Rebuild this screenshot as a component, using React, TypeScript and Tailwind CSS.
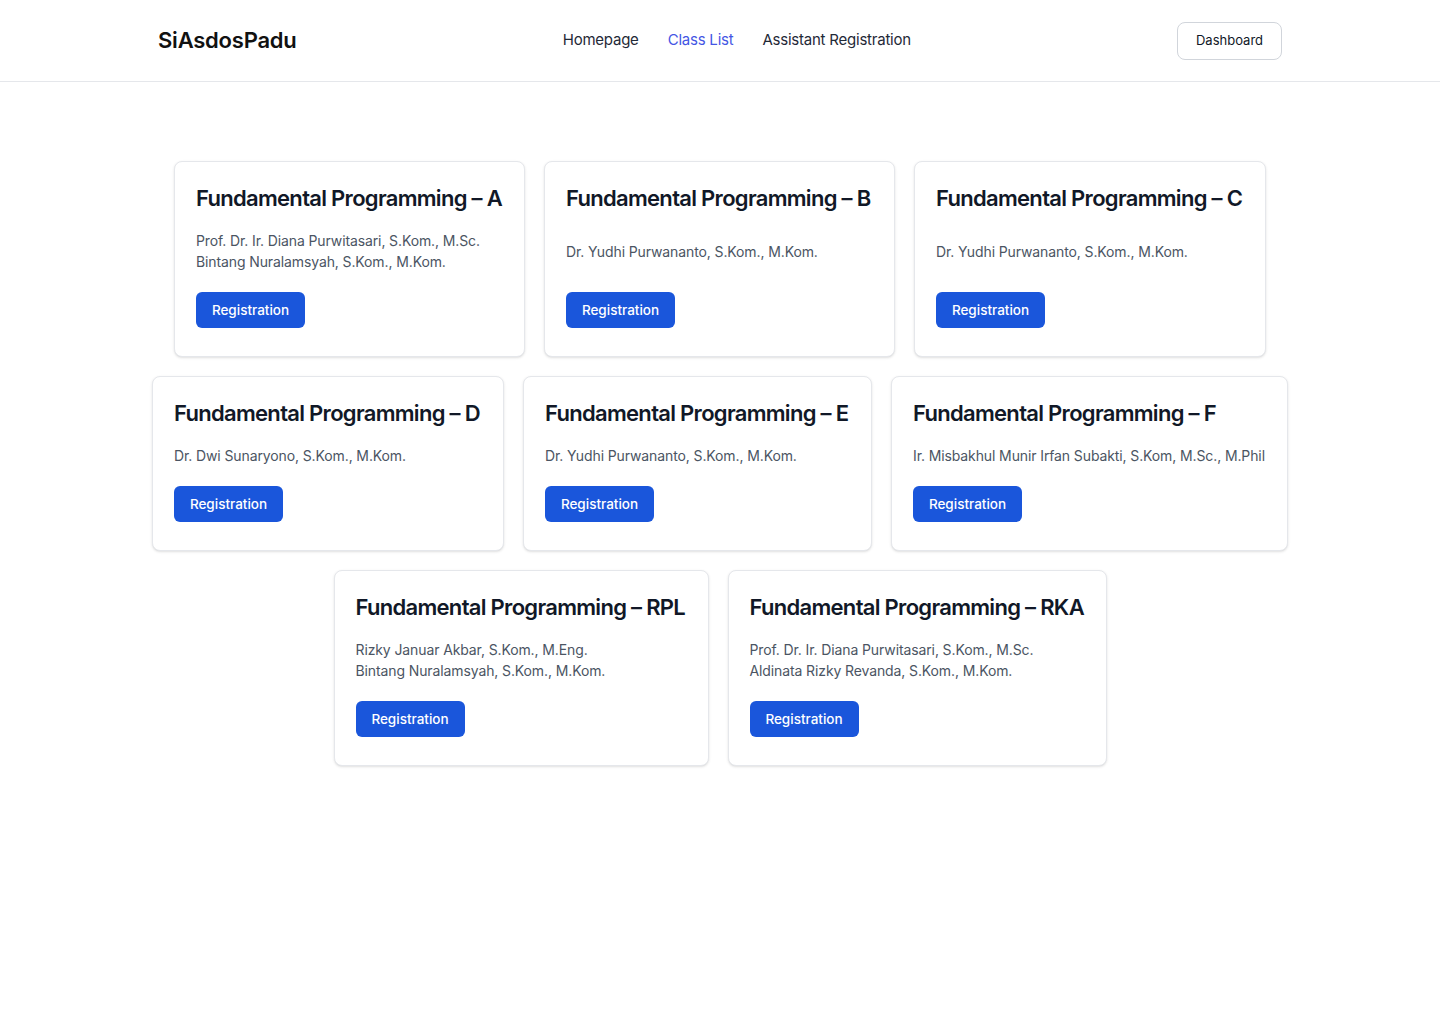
const classes = [
  { name: "A", w: "w-[351px]", lecturers: ["Prof. Dr. Ir. Diana Purwitasari, S.Kom., M.Sc.", "Bintang Nuralamsyah, S.Kom., M.Kom."] },
  { name: "B", w: "w-[351px]", lecturers: ["Dr. Yudhi Purwananto, S.Kom., M.Kom."] },
  { name: "C", w: "w-[352px]", lecturers: ["Dr. Yudhi Purwananto, S.Kom., M.Kom."] },
  { name: "D", w: "w-[352px]", lecturers: ["Dr. Dwi Sunaryono, S.Kom., M.Kom."] },
  { name: "E", w: "w-[349px]", lecturers: ["Dr. Yudhi Purwananto, S.Kom., M.Kom."] },
  { name: "F", w: "w-[397px]", lecturers: ["Ir. Misbakhul Munir Irfan Subakti, S.Kom, M.Sc., M.Phil"] },
  { name: "RPL", w: "w-[375px]", lecturers: ["Rizky Januar Akbar, S.Kom., M.Eng.", "Bintang Nuralamsyah, S.Kom., M.Kom."] },
  { name: "RKA", w: "w-[379px]", lecturers: ["Prof. Dr. Ir. Diana Purwitasari, S.Kom., M.Sc.", "Aldinata Rizky Revanda, S.Kom., M.Kom."] },
];

function ClassCard({ name, w, lecturers }: { name: string; w: string; lecturers: string[] }) {
  return (
    <div className={`${w} flex flex-col justify-between gap-[18px] bg-white border border-[#e5e7eb] rounded-lg shadow-sm pl-[21px] pr-[18px] pt-[22px] pb-[28px]`}>
      <h3 className="text-[22px] leading-[28px] font-semibold text-[#111827] tracking-[-0.032em] whitespace-nowrap">
        Fundamental Programming – {name}
      </h3>
      <div className="text-[14px] leading-[21px] text-[#4b5563] tracking-[-0.008em] whitespace-nowrap">
        {lecturers.map((l) => (
          <p key={l}>{l}</p>
        ))}
      </div>
      <div className="mt-[2px]">
        <button className="w-[109px] h-9 rounded-md bg-[#1a56db] text-white text-[13.5px] font-medium hover:bg-blue-800">
          Registration
        </button>
      </div>
    </div>
  );
}

export default function App() {
  return (
    <div className="min-h-screen bg-white font-['Inter','Liberation_Sans',sans-serif]">
      <header className="border-b border-[#e5e7eb]">
        <div className="max-w-[1124px] mx-auto h-[81px] flex items-center justify-between">
          <span className="text-[22px] font-semibold text-[#111] tracking-[-0.01em]">SiAsdosPadu</span>
          <nav className="flex items-center gap-[29px] text-[15px] text-[#1f2937] tracking-[-0.015em]">
            <a href="#">Homepage</a>
            <a href="#" className="text-[#4456e4]">Class List</a>
            <a href="#">Assistant Registration</a>
          </nav>
          <button className="w-[105px] h-[38px] rounded-lg border border-[#d1d5db] text-[13px] text-[#111827]">
            Dashboard
          </button>
        </div>
      </header>
      <main className="pt-[79px] pb-20">
        <div className="w-[1152px] mx-auto flex flex-wrap justify-center gap-[19px]">
          {classes.map((c) => (
            <ClassCard key={c.name} {...c} />
          ))}
        </div>
      </main>
    </div>
  );
}
